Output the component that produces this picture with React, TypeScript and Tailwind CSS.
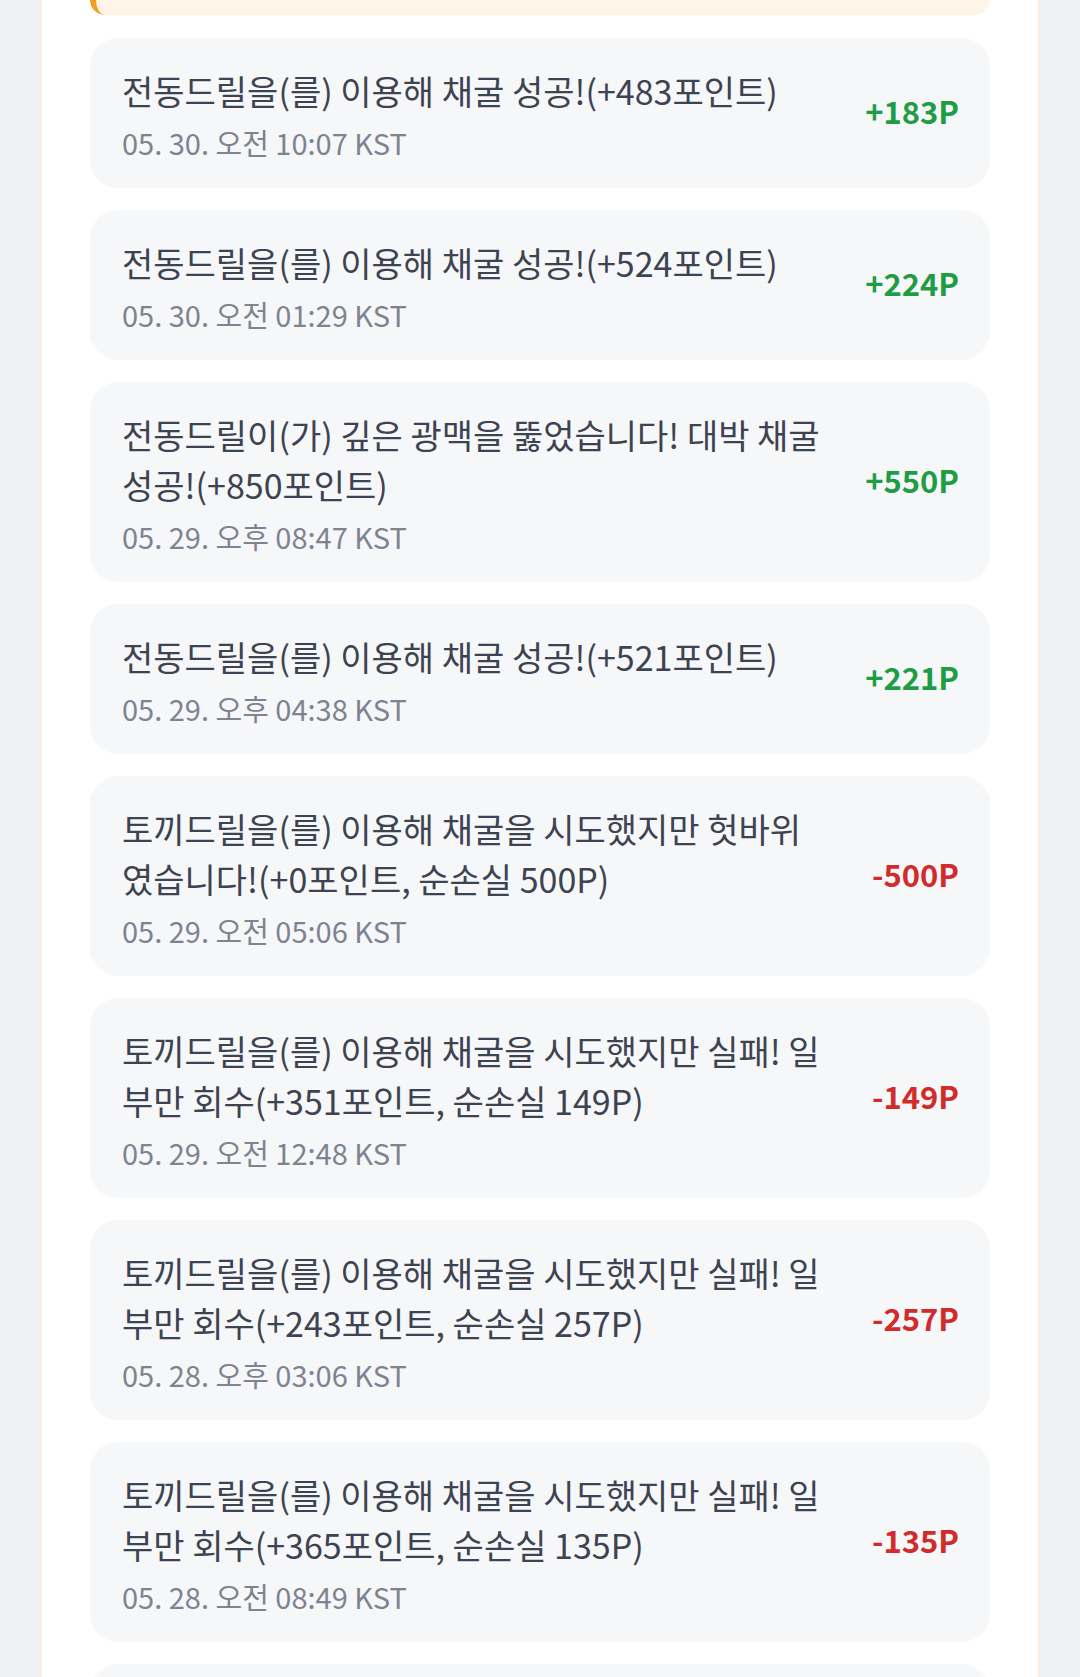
import React from "react";

type LogItem = {
  id: number;
  message: string;
  date: string;
  amount: number;
};

const logs: LogItem[] = [
  { id: 1, message: "전동드릴을(를) 이용해 채굴 성공!(+483포인트)", date: "05. 30. 오전 10:07 KST", amount: 183 },
  { id: 2, message: "전동드릴을(를) 이용해 채굴 성공!(+524포인트)", date: "05. 30. 오전 01:29 KST", amount: 224 },
  { id: 3, message: "전동드릴이(가) 깊은 광맥을 뚫었습니다! 대박 채굴 성공!(+850포인트)", date: "05. 29. 오후 08:47 KST", amount: 550 },
  { id: 4, message: "전동드릴을(를) 이용해 채굴 성공!(+521포인트)", date: "05. 29. 오후 04:38 KST", amount: 221 },
  { id: 5, message: "토끼드릴을(를) 이용해 채굴을 시도했지만 헛바위였습니다!(+0포인트, 순손실 500P)", date: "05. 29. 오전 05:06 KST", amount: -500 },
  { id: 6, message: "토끼드릴을(를) 이용해 채굴을 시도했지만 실패! 일부만 회수(+351포인트, 순손실 149P)", date: "05. 29. 오전 12:48 KST", amount: -149 },
  { id: 7, message: "토끼드릴을(를) 이용해 채굴을 시도했지만 실패! 일부만 회수(+243포인트, 순손실 257P)", date: "05. 28. 오후 03:06 KST", amount: -257 },
  { id: 8, message: "토끼드릴을(를) 이용해 채굴을 시도했지만 실패! 일부만 회수(+365포인트, 순손실 135P)", date: "05. 28. 오전 08:49 KST", amount: -135 },
  { id: 9, message: "토끼드릴을(를) 이용해 채굴을 시도했지만 실패! 일부만 회수(+412포인트, 순손실 88P)", date: "05. 28. 오전 02:15 KST", amount: -88 },
];

const App = () => {
  return (
    <main
      className="h-[1677px] overflow-hidden bg-[#eff1f4] px-[40px]"
      style={{ fontFamily: '"Noto Sans CJK KR", "Noto Sans", sans-serif' }}
    >
      <section className="h-full border-x-2 border-[#fbeedc] bg-white px-[48px]">
        {/* bottom edge of the notice box scrolled above */}
        <div className="h-[15px] rounded-b-[30px] border-l-[6px] border-[#f0a020] bg-[#fef5e7]" />

        <ul className="mt-[23px] flex flex-col gap-[22px]">
          {logs.map(({ id, message, date, amount }) => (
            <li
              key={id}
              className="flex items-center gap-6 rounded-[28px] bg-[#f6f7f9] pt-[28px] pb-[26px] pl-[32px] pr-[31px]"
            >
              <div className="min-w-0 flex-1">
                <p className="text-[34px] leading-[50px] text-[#3d4350]">{message}</p>
                <p className="mt-[6px] text-[29px] leading-[40px] text-[#7d8490]">{date}</p>
              </div>
              <span
                className={
                  amount >= 0
                    ? "mb-[6px] w-[109px] shrink-0 text-right text-[31px] font-bold text-[#1f9d45]"
                    : "mb-[6px] w-[109px] shrink-0 text-right text-[31px] font-bold text-[#d12b2b]"
                }
              >
                {amount >= 0 ? `+${amount}P` : `${amount}P`}
              </span>
            </li>
          ))}
        </ul>
      </section>
    </main>
  );
};

export default App;
